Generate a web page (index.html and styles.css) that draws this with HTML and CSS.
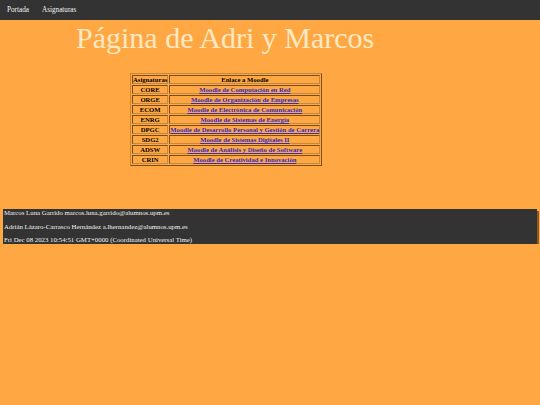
FILE: index.html
```html
<!DOCTYPE html>
<html lang="es">
<head>
<meta charset="utf-8">
<title>Página de Adri y Marcos</title>
<link rel="stylesheet" href="styles.css">
</head>
<body>
<nav class="topnav">
  <a href="#">Portada</a>
  <a href="#">Asignaturas</a>
</nav>
<h1 class="title">Página de Adri y Marcos</h1>
<table class="subjects">
  <tr><th>Asignaturas</th><th>Enlace a Moodle</th></tr>
  <tr><td>CORE</td><td><a href="#">Moodle de Computación en Red</a></td></tr>
  <tr><td>ORGE</td><td><a href="#">Moodle de Organización de Empresas</a></td></tr>
  <tr><td>ECOM</td><td><a href="#">Moodle de Electrónica de Comunicación</a></td></tr>
  <tr><td>ENRG</td><td><a href="#">Moodle de Sistemas de Energía</a></td></tr>
  <tr><td>DPGC</td><td><a href="#">Moodle de Desarrollo Personal y Gestión de Carrera</a></td></tr>
  <tr><td>SDG2</td><td><a href="#">Moodle de Sistemas Digitales II</a></td></tr>
  <tr><td>ADSW</td><td><a href="#">Moodle de Análisis y Diseño de Software</a></td></tr>
  <tr><td>CRIN</td><td><a href="#">Moodle de Creatividad e Innovación</a></td></tr>
</table>
<footer class="footer">
  <p>Marcos Luna Garrido marcos.luna.garrido@alumnos.upm.es</p>
  <p>Adrián Lázaro-Carrasco Hernández a.lhernandez@alumnos.upm.es</p>
  <p>Fri Dec 08 2023 10:54:51 GMT+0000 (Coordinated Universal Time)</p>
</footer>
</body>
</html>
```
FILE: styles.css
```css
html, body {
  margin: 0;
  padding: 0;
  background: #ffa843;
  font-family: "Liberation Serif", "Times New Roman", serif;
}
.topnav {
  background: #333333;
  height: 20px;
  display: flex;
  align-items: center;
  padding-left: 7px;
  gap: 13px;
}
.topnav a {
  color: #f2f2f2;
  text-decoration: none;
  font-size: 7.2px;
}
.title {
  margin: 0;
  padding: 0 0 0 76px;
  font-weight: normal;
  font-size: 30px;
  line-height: 36px;
  color: #fde8c4;
}
.subjects {
  margin: 17px 0 0 130px;
  border: 1px outset #c88838;
  border-spacing: 1px;
  font-size: 6.65px;
  font-weight: bold;
}
.subjects th, .subjects td {
  border: 1px inset #c88838;
  padding: 0;
  text-align: center;
  line-height: 7px;
}
.subjects a {
  color: #3a2bb8;
}
.footer {
  margin: 43px 3px 0 3px;
  background: #333333;
  color: #f2f2f2;
  font-size: 6.8px;
  box-shadow: 2px 2px 0 #8a5a22;
  padding: 0 1px;
}
.footer p {
  margin: 0 0 7.5px 0;
  line-height: 6px;
}
.footer p:first-child {
  padding-top: 1px;
}
.footer p:last-child {
  margin-bottom: 0;
  padding-bottom: 1px;
}
```
